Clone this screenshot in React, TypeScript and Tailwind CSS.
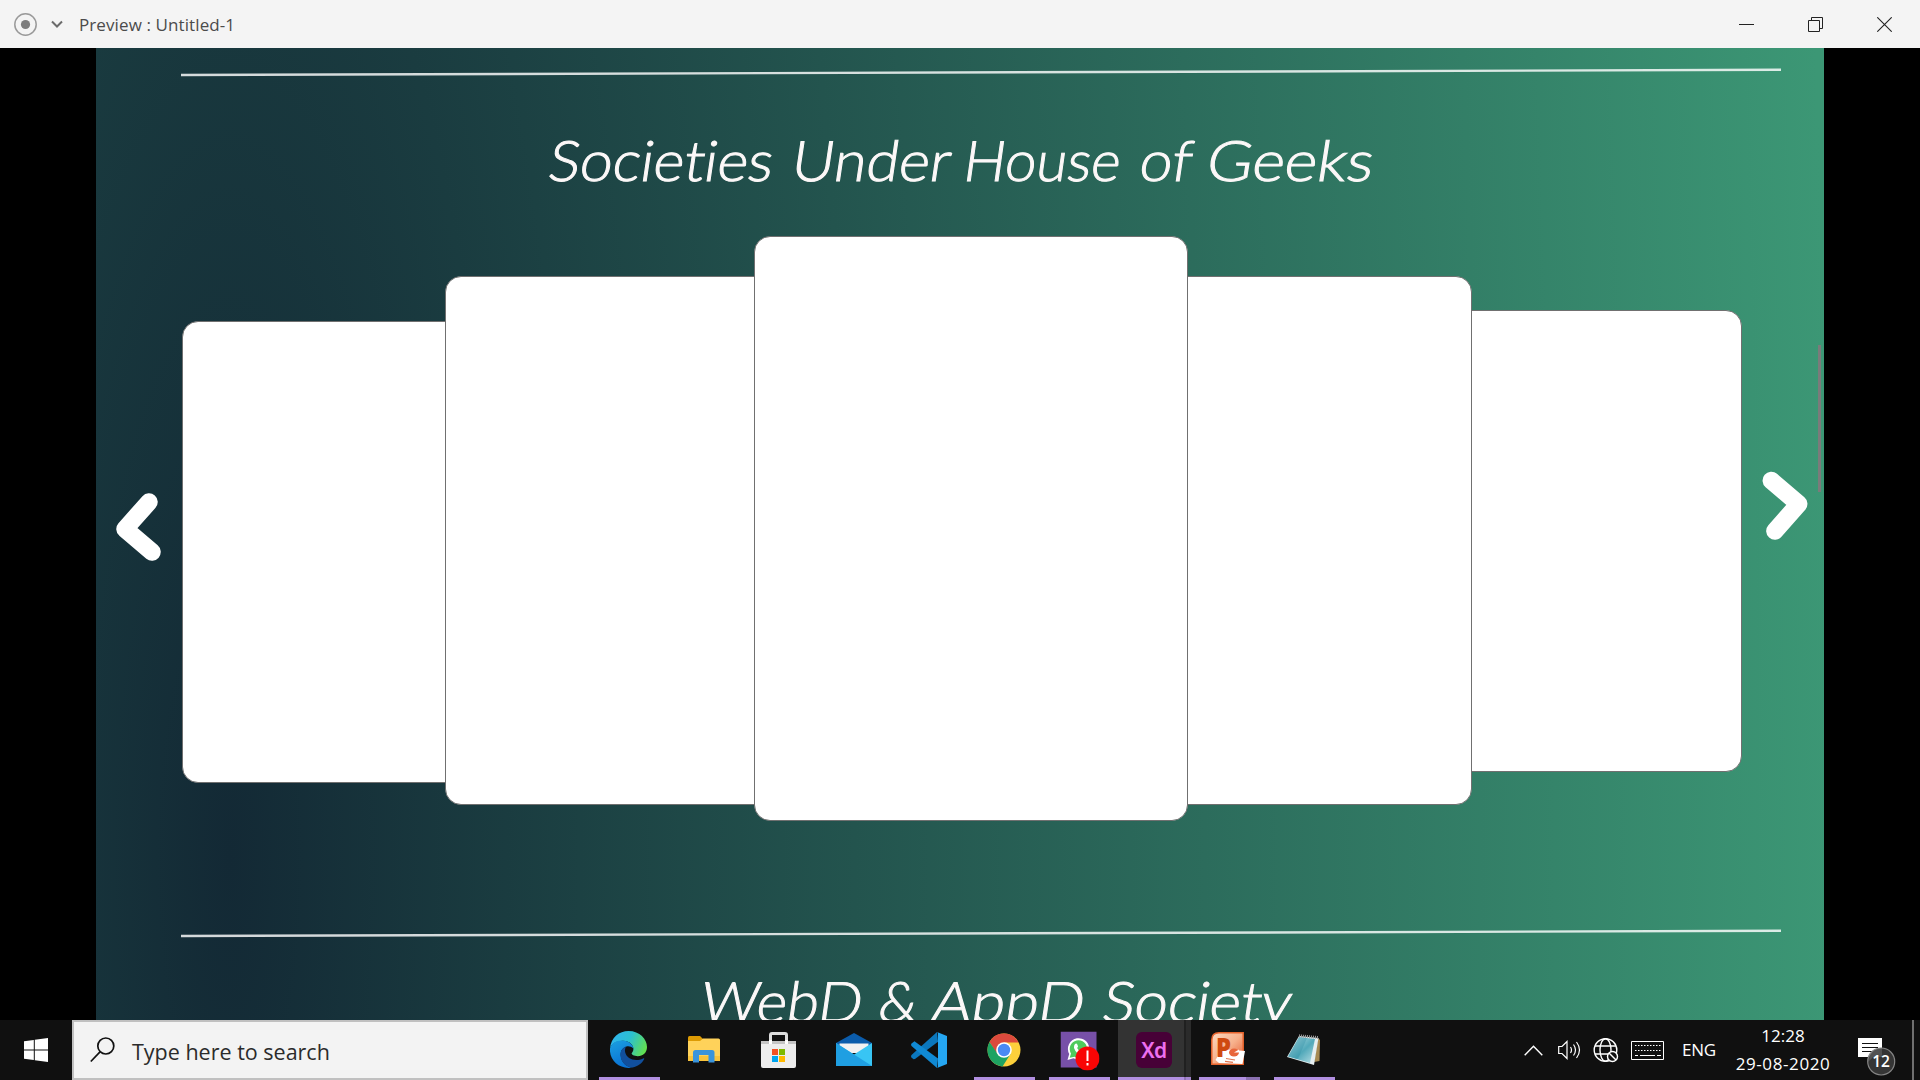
import React from "react";

type Word = { text: string; className: string; stretch: string };

const societies: Word[] = [
  { text: "Societies", className: "w-[243px]", stretch: "scale-x-[1.05]" },
  { text: "Under", className: "w-[172px]", stretch: "scale-x-[1.054]" },
  { text: "House", className: "w-[176px]", stretch: "scale-x-[1.002]" },
  { text: "of", className: "w-[67px]", stretch: "scale-x-[1.05]" },
  { text: "Geeks", className: "w-[170px]", stretch: "scale-x-[1.112]" },
];

const webSociety: Word[] = [
  { text: "WebD", className: "w-[178px]", stretch: "scale-x-[1.035]" },
  { text: "&", className: "w-[53px]", stretch: "scale-x-[1]" },
  { text: "AppD", className: "w-[171px]", stretch: "scale-x-[1.09]" },
  { text: "Society", className: "w-[200px]", stretch: "scale-x-[1.07]" },
];

function Heading({ words, className }: { words: Word[]; className: string }) {
  return (
    <h2 className={`flex shrink-0 font-['Lato',sans-serif] text-[56px] leading-[64px] font-light whitespace-nowrap text-[#fcf8f8] [font-variant-ligatures:none] [-webkit-text-stroke:1px_#fcf8f8] ${className}`}>
      {words.map((w) => (
        <span key={w.text} className={`shrink-0 ${w.className}`}>
          <span className={`inline-block origin-[0_50px] -skew-x-[8deg] ${w.stretch}`}>{w.text}</span>
        </span>
      ))}
    </h2>
  );
}

function Divider({ className }: { className: string }) {
  return (
    <svg className={`block shrink-0 ${className}`} width="1600" height="10" viewBox="0 0 1600 10">
      <line x1="0" y1="8" x2="1600" y2="2.8" stroke="#fff" strokeOpacity="0.82" strokeWidth="2.4" />
    </svg>
  );
}

const card = "shrink-0 rounded-[16px] border border-[#707070] bg-white";

function TitleBar() {
  return (
    <header className="flex h-12 items-center bg-[#f4f4f4]">
      <svg className="ml-[13px]" width="24" height="24" viewBox="0 0 24 24">
        <circle cx="12.5" cy="12.5" r="10.7" fill="none" stroke="#9a9a9a" strokeWidth="1.5" />
        <circle cx="12.5" cy="12.5" r="4.6" fill="#7d7d7d" />
      </svg>
      <svg className="ml-[14px]" width="12" height="8" viewBox="0 0 12 8">
        <path d="M1 1.5 6 6.5 11 1.5" fill="none" stroke="#6b6b6b" strokeWidth="2" />
      </svg>
      <span className="ml-[16px] pt-px font-['Open_Sans',sans-serif] text-[17px] leading-6 tracking-[0.1px] text-[#4b4b4b]">Preview : Untitled-1</span>
      <div className="ml-auto flex h-12 items-center">
        <svg className="mr-[54px]" width="15" height="15" viewBox="0 0 15 15"><path d="M0 7.5H15" stroke="#222" /></svg>
        <svg className="mr-[54px]" width="15" height="15" viewBox="0 0 15 15" fill="none" stroke="#222">
          <path d="M.5 3.5H11.500V14.500H.5ZM3.500 3.500V.5H14.500V11.500H11.500" />
        </svg>
        <svg className="mr-[28px]" width="15" height="15" viewBox="0 0 15 15"><path d="M.3.3 14.700 14.700M14.700.3.3 14.700" stroke="#222" strokeWidth="1.1" /></svg>
      </div>
    </header>
  );
}

function Preview() {
  return (
    <main className="flex h-[972px] justify-center bg-black">
      <section className="relative flex w-[1728px] flex-col overflow-hidden bg-[radial-gradient(ellipse_1600px_6200px_at_134px_810px,#132935_0%,#3c9775_100%)]">
        <Divider className="mt-[19px] ml-[85px]" />
        <Heading words={societies} className="mt-[6px] ml-[451px] h-[76px] pt-[45px]" />
        <div className="mt-[29px] flex h-[633px] shrink-0">
          <svg className="mt-[296px] ml-[16px] shrink-0" width="52" height="78" viewBox="0 0 52 78">
            <path d="M37 18 13 45 40 68" fill="none" stroke="#fff" strokeWidth="17.500" strokeLinecap="round" strokeLinejoin="round" />
          </svg>
          <div className="ml-[18px] flex shrink-0">
            <div className={`${card} mt-[133px] h-[462px] w-[284px]`} />
            <div className={`${card} relative -ml-[21px] mt-[88px] h-[529px] w-[330px]`} />
            <div className={`${card} relative z-10 -ml-[21px] mt-[48px] h-[585px] w-[434px]`} />
            <div className={`${card} relative z-[5] -ml-[21px] mt-[88px] h-[529px] w-[305px]`} />
            <div className={`${card} -ml-[21px] mt-[122px] h-[462px] w-[291px]`} />
          </div>
          <svg className="mt-[272px] ml-[15px] shrink-0" width="54" height="82" viewBox="0 0 54 82">
            <path d="M14.300 20.500 41.700 44 17.900 71" fill="none" stroke="#fff" strokeWidth="17.500" strokeLinecap="round" strokeLinejoin="round" />
          </svg>
        </div>
        <Divider className="mt-[107px] ml-[85px]" />
        <Heading words={webSociety} className="mt-[31px] ml-[603px]" />
        <div className="absolute top-[297px] right-[3px] h-[147px] w-[3px] bg-[#7b7b7b]" />
      </section>
    </main>
  );
}

function EdgeIcon() {
  return (
    <svg width="37" height="37" viewBox="0 0 36 36">
      <defs>
        <linearGradient id="edgeTop" x1="0" x2="1" y1="0.3" y2="0.6"><stop offset="0" stopColor="#2fb4f0" /><stop offset=".5" stopColor="#2cc0d0" /><stop offset="1" stopColor="#63e04f" /></linearGradient>
        <linearGradient id="edgeLeft" x1="0" x2="0.4" y1="0" y2="1"><stop offset="0" stopColor="#1ba0e0" /><stop offset="1" stopColor="#0a72d4" /></linearGradient>
      </defs>
      <path d="M0 17C1 6 9 0 18 0c11 0 18 8 18 15.500 0 5.500-4 9-9 9-4 0-6-1.500-6-2.500 0-1 1.800-1.600 1.800-4.500 0-4-4-8-10.300-8C6 9.500 1 13 0 17Z" fill="url(#edgeTop)" />
      <path d="M0 17C1 12 6 9 12 9.200c6 0 10.500 4 10.800 7.800-2-2-4.500-2.500-6.800-2C12 16 10 20 10.500 24c.5 6 5 11 11.500 11.500C10 38-1 29 0 17Z" fill="url(#edgeLeft)" />
      <path d="M15.500 15C11 17 9.500 21 10.300 25c1 6 6 10.300 11.700 10.500 5-1 9-4 11.200-8 .4-.8-.2-1.200-1-.8-7 3.300-16 1-17.500-6.200-.4-2 .1-4 .8-5.500Z" fill="#114f9c" />
    </svg>
  );
}

function ExplorerIcon() {
  return (
    <svg width="32" height="27" viewBox="0 0 32 27">
      <path d="M0 1.500Q0 0 1.500 0H12l3 3V6H0Z" fill="#dd9b04" />
      <path d="M0 5H12l3-2.500H30.500Q32 2.500 32 4V24.500H0Z" fill="#ffd25a" />
      <path d="M0 20H32V25H0Z" fill="#f8c33c" />
      <path d="M5 26.500V16.500Q5 14 7.500 14H24Q26.500 14 26.500 16.500V26.500H20.500V19H11V26.500Z" fill="#3a94dc" />
    </svg>
  );
}

function StoreIcon() {
  return (
    <svg width="35" height="36" viewBox="0 0 35 36">
      <path d="M9.500 13V3Q9.500 1.500 11 1.500H24Q25.500 1.500 25.500 3V13" fill="none" stroke="#ddd" strokeWidth="3" />
      <path d="M0 9H35V34Q35 36 33 36H2Q0 36 0 34Z" fill="#ededed" />
      <path d="M0 9H35V12H0Z" fill="#c4c4c4" />
      <path d="M8 8H11V12H8ZM24 8H27V12H24Z" fill="#fff" />
      <path d="M11 17H17V23H11Z" fill="#f25022" /><path d="M18 17H24V23H18Z" fill="#7fba00" />
      <path d="M11 24H17V30H11Z" fill="#00a4ef" /><path d="M18 24H24V30H18Z" fill="#ffb900" />
    </svg>
  );
}

function MailIcon() {
  return (
    <svg width="36" height="33" viewBox="0 0 36 33">
      <path d="M0 10 18 0 36 10 34 16H2Z" fill="#0b5cab" />
      <path d="M3.500 10.500H32.500V20H3.500Z" fill="#f1f1f1" />
      <path d="M0 10 18 21.500 36 10V33H0Z" fill="#38c5f4" />
      <path d="M0 10 36 33H0Z" fill="#1f9fe2" />
    </svg>
  );
}

function CodeIcon() {
  return (
    <svg width="36" height="36" viewBox="0 0 36 36">
      <path d="M26 0 .5 23Q-.4 24.500.5 25.500L2.500 27.200 4 27 27 9.800Z" fill="#0b77bd" />
      <path d="M3.500 9.200.5 11.500Q-.4 12.800.5 14L26 36 27 26.500Z" fill="#1089d3" />
      <path d="M26 0 36 4V32L26 36Q27 35.500 27 34V2Q27 .5 26 0Z" fill="#25a6f2" />
    </svg>
  );
}

function ChromeIcon() {
  return (
    <svg width="34" height="34" viewBox="0 0 34 34">
      <circle cx="17" cy="17" r="16.500" fill="#fdd03b" />
      <path d="M2.500 9A16.500 16.500 0 0 1 31.500 9.500H17L10 21Z" fill="#dc4a3d" />
      <path d="M2.500 9A16.500 16.500 0 0 0 15.500 33.500L23.500 21 10 20Z" fill="#1ea362" />
      <circle cx="17" cy="17" r="7.800" fill="#fff" />
      <circle cx="17" cy="17" r="6.200" fill="#4a8af4" />
    </svg>
  );
}

function WhatsAppIcon() {
  return (
    <svg className="translate-x-[1.500px] translate-y-[1.500px]" width="39" height="39" viewBox="0 0 39 39">
      <path d="M0 0H36V36H0Z" fill="#7750a8" />
      <path d="M7 28.500 8.700 22.500A10.700 10.700 0 1 1 13 26.800Z" fill="#fff" />
      <path d="M9.200 26.300 10.500 22A8.700 8.700 0 1 1 14 25.200Z" fill="#4fca5c" />
      <path d="M14.500 12.500q1.500-1.200 2.200.2l.8 2q.2.700-.9 1.800 1.500 3 4.300 4 1.200-1.500 1.800-1.200l2.500 1.200q0 3-3.500 3.200-6-1-8.200-7.200-.3-2.500 1-4Z" fill="#fff" />
      <circle cx="27" cy="27" r="12" fill="#f90505" />
      <path d="M27 19V29.500M27 31.500V34" stroke="#fff" strokeWidth="2" />
    </svg>
  );
}

function PowerPointIcon() {
  return (
    <svg width="34" height="33" viewBox="0 0 34 33">
      <defs><linearGradient id="ppt" x1="0" x2="1" y1="0" y2="1"><stop offset="0" stopColor="#fbd9c2" /><stop offset=".5" stopColor="#f7b18c" /><stop offset="1" stopColor="#e2562a" /></linearGradient></defs>
      <path d="M8 .8H32.200V32.200H.8V8Q.8.8 8 .8Z" fill="url(#ppt)" stroke="#e6632c" strokeWidth="1.500" />
      <path d="M11 17 34 19 31.500 32 8 31 4.500 28Z" fill="#fff" />
      <text x="5" y="25" fill="#cf4a10" fontSize="26" fontWeight="800" fontFamily="Open Sans, sans-serif" textLength="15" lengthAdjust="spacingAndGlyphs">P</text>
      <ellipse cx="23" cy="20.500" rx="5" ry="4" fill="#e8663b" /><path d="M23 20.500 28 17.500V20.500Z" fill="#fff" />
      <path d="M15 26.500 24 28M14 29.300 22 30.300" stroke="#e07550" strokeWidth="1.200" />
    </svg>
  );
}

function NotepadIcon() {
  return (
    <svg width="34" height="32" viewBox="0 0 34 32">
      <defs><linearGradient id="note" x1="0" x2="1" y1="0" y2="1"><stop offset="0" stopColor="#c7e8ec" /><stop offset=".55" stopColor="#52a9ba" /><stop offset="1" stopColor="#b9dfe5" /></linearGradient></defs>
      <path d="M31 4 33 6 32.500 27 27 28Z" fill="#a68a52" />
      <path d="M12 2 31.500 4 27 31 0 23Z" fill="#e6eff1" />
      <path d="M12 3 28 5 23 29 1 22.500Z" fill="url(#note)" />
      <path d="M12 3 20 4 11 25 1 22.500Z" fill="#2e8ca3" opacity=".35" />
      <path d="M12 1.800 31 3.500" stroke="#999" strokeWidth="3" strokeDasharray="1 1" />
    </svg>
  );
}

const bar = "h-[3px] bg-[#b18fe0]";

function AppSlot({ children, open }: { children: React.ReactNode; open?: boolean }) {
  return (
    <div className="flex h-[60px] w-[75px] shrink-0 flex-col items-center">
      <div className="flex h-[57px] items-center pt-[2px] pr-[2px]">{children}</div>
      {open && <div className={`w-[61px] ${bar}`} />}
    </div>
  );
}

function Taskbar() {
  return (
    <footer className="flex h-[60px] bg-[#101010] font-['Open_Sans',sans-serif]">
      <div className="flex w-[72px] shrink-0 items-center justify-center">
        <svg width="24" height="24" viewBox="0 0 24 24" fill="#fff"><path d="M0 3.300 9.800 2V11.500H0ZM10.800 1.800 24 0V11.500H10.800ZM0 12.500H9.800V22L0 20.700ZM10.800 12.500H24V24L10.800 22.200Z" /></svg>
      </div>
      <div className="flex w-[516px] shrink-0 items-center border-2 border-[#c0c0c0] bg-[#f3f3f3]">
        <svg className="ml-[16px]" width="25" height="26" viewBox="0 0 25 26" fill="none" stroke="#111" strokeWidth="1.700"><circle cx="15.800" cy="9" r="8" /><path d="M10 14.800.8 24.500" /></svg>
        <span className="ml-[17px] pt-[5px] text-[21.500px] tracking-[0px] text-[#2b2b2b]">Type here to search</span>
      </div>
      <nav className="ml-[4px] flex">
        <AppSlot open><EdgeIcon /></AppSlot>
        <AppSlot><ExplorerIcon /></AppSlot>
        <AppSlot><StoreIcon /></AppSlot>
        <AppSlot><MailIcon /></AppSlot>
        <AppSlot><CodeIcon /></AppSlot>
        <AppSlot open><ChromeIcon /></AppSlot>
        <AppSlot open><WhatsAppIcon /></AppSlot>
        <div className="flex h-[60px] w-[75px] pl-px">
          <div className="flex w-[66px] flex-col bg-[#333]">
            <div className="flex h-[57px] items-center justify-center pt-[3px] pl-[6px]">
              <div className="flex size-9 items-center justify-center rounded-[6px] bg-[#470137] font-['Noto_Sans',sans-serif] text-[21px] leading-none font-semibold tracking-[-0.5px] text-[#ee6ff0]">Xd</div>
            </div>
            <div className={bar} />
          </div>
          <div className="flex w-[2px] flex-col justify-end bg-[#202020]"><div className="h-[3px] bg-[#8f73b4]" /></div>
          <div className="flex w-[5px] flex-col justify-end bg-[#2b2b2b]"><div className="h-[3px] bg-[#a585d0]" /></div>
        </div>
        <div className="flex h-[60px] w-[75px] flex-col pl-[7px]">
          <div className="flex h-[57px] items-center pl-[12px]"><PowerPointIcon /></div>
          <div className="flex"><div className={`w-[47px] ${bar}`} /><div className="h-[3px] w-[14px] bg-[#8a70b0]" /></div>
        </div>
        <AppSlot open><NotepadIcon /></AppSlot>
      </nav>
      <div className="ml-auto flex items-center text-[17px] text-white">
        <svg className="mr-[15px]" width="19" height="11" viewBox="0 0 19 11"><path d="M.7 10.200 9.500 1.200 18.300 10.200" fill="none" stroke="#fff" strokeWidth="1.400" /></svg>
        <svg className="mr-[12px]" width="23" height="20" viewBox="0 0 23 20" fill="none" stroke="#fff" strokeWidth="1.200">
          <path d="M.7 6.500H4L9 1.500V18.500L4 13.500H.7Z" /><path d="M12.500 7q2 3 0 6M15.500 4.500q4 5.500 0 11M18.500 2q6 8 0 16" />
        </svg>
        <svg className="mr-[12px]" width="26" height="26" viewBox="0 0 26 26" fill="none" stroke="#fff" strokeWidth="1.400">
          <circle cx="12.500" cy="13" r="11.300" /><ellipse cx="12.500" cy="13" rx="5.500" ry="11.300" /><path d="M2 9H23M2 17H23" />
          <circle cx="19.500" cy="19.500" r="5" fill="#101010" /><path d="M16 16 23 23" />
        </svg>
        <svg className="mr-[18px]" width="33" height="19" viewBox="0 0 33 19" fill="none" stroke="#fff">
          <path d="M.5.5H32.500V18.500H.5Z" /><path d="M4 4.500H30M4 9.500H30" strokeWidth="1.200" strokeDasharray="1.500 1.500" /><path d="M4 14.500H7M9 14.500H24M26 14.500H30" strokeWidth="1.200" />
        </svg>
        <span className="w-[36px] tracking-[-0.2px]">ENG</span>
        <div className="flex w-[130px] flex-col items-center text-[17px] leading-[28px]">
          <span>12:28</span>
          <span className="tracking-[0.600px]">29-08-2020</span>
        </div>
        <svg className="mt-[12px] ml-[10px]" width="38" height="39" viewBox="0 0 38 39">
          <path d="M0 1H24V20H15L10 25V20H0Z" fill="#fff" /><path d="M4 6.500H20M4 10.500H20M4 14.500H15" stroke="#111" strokeWidth="1.200" />
          <circle cx="23.200" cy="24.500" r="13.500" fill="#3a3a3a" fillOpacity=".88" stroke="#858585" strokeWidth="1.200" />
          <text x="23" y="30.300" textAnchor="middle" fill="#fff" fontSize="15.500" fontWeight="600">12</text>
        </svg>
        <div className="ml-[16px] h-[60px] w-[2px] bg-[#707070]" />
        <div className="w-[6px]" />
      </div>
    </footer>
  );
}

export default function App() {
  return (
    <div className="h-[1080px] w-[1920px] overflow-hidden bg-black">
      <TitleBar />
      <Preview />
      <Taskbar />
    </div>
  );
}
